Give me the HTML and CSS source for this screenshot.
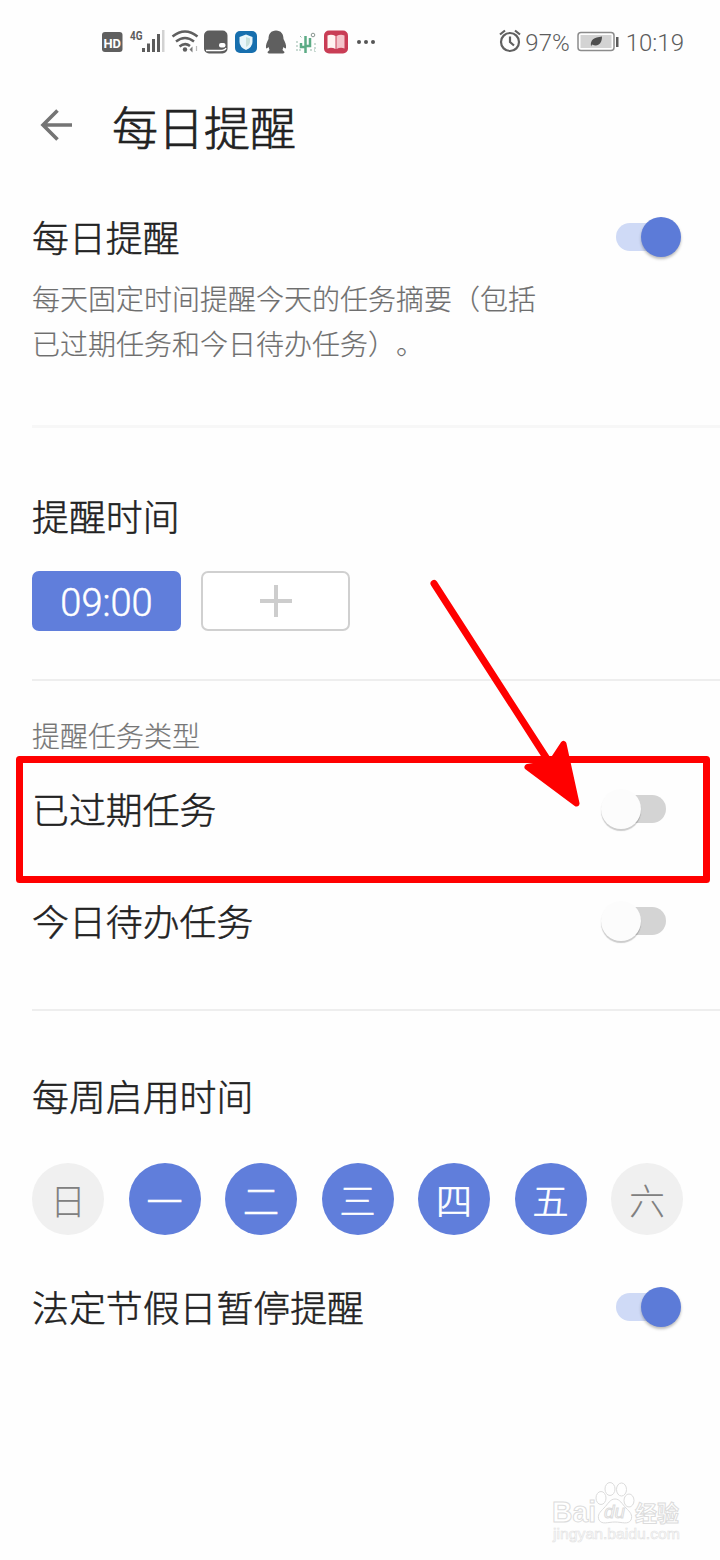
FILE: index.html
```html
<!DOCTYPE html>
<html lang="zh-CN">
<head>
<meta charset="utf-8">
<title>每日提醒</title>
<link rel="stylesheet" href="styles.css">
</head>
<body>
<div class="screen">
  <div class="status">
    <svg class="status-icons" width="280" height="30" viewBox="100 27 280 30">
      <rect x="102" y="32" width="20.500" height="20" rx="3" fill="#5f5f5f"/>
      <text class="hd" x="103.500" y="47.500" textLength="17.500" lengthAdjust="spacingAndGlyphs">HD</text>
      <text class="net" x="130" y="40" textLength="12.500" lengthAdjust="spacingAndGlyphs">4G</text>
      <g fill="#5c5c5c"><rect x="142" y="48" width="3" height="4"/><rect x="147" y="43.500" width="3" height="8.500"/><rect x="152" y="39" width="3" height="13"/><rect x="157" y="34" width="3" height="18"/></g>
      <rect x="162" y="30" width="2.500" height="22" fill="#d2d2d2"/>
      <g fill="none" stroke="#5f5f5f" stroke-width="2.500"><path d="M172.500 36.500Q185 26.500 197.500 36.500"/><path d="M176 41.500Q185 34.500 194 41.500"/><path d="M179.500 46.500Q185 42 190 46"/></g>
      <circle cx="185" cy="49.500" r="2.200" fill="#5f5f5f"/><path d="M192.500 46.500l-3 3 3 3z" fill="#777"/><path d="M196.500 46v5" fill="none" stroke="#bbb" stroke-width="1.200"/>
      <rect x="204" y="30.500" width="23.500" height="23" rx="5" fill="#5d5d5d"/>
      <path d="M206 50.500H220Q225 50.500 226 48" fill="none" stroke="#fff" stroke-width="1.500"/><rect x="219" y="43" width="6.500" height="4.500" rx="2" fill="#fff"/>
      <rect x="235" y="31" width="22" height="22" rx="5" fill="#176fae"/>
      <path d="M246 34.500l6.500 2.500v5q0 5-6.500 8-6.500-3-6.500-8v-5z" fill="#e8f6fb"/><path d="M246 37v10q4-2 4-6v-2.500z" fill="#c7e0dc"/>
      <path d="M276 30.500c-5 0-7.500 3.500-7.500 8.500-1.500 3-3 6-2.500 9 .5 1 1.500 0 2.500-1l1 3-2 2q0 1.500 3 1.500h11q3 0 3-1.500l-2-2 1-3c1 1 2 2 2.500 1 .5-3-1-6-2.500-9 0-5-2.500-8.500-7.500-8.500z" fill="#5f5f5f"/>
      <g fill="none" stroke="#5cab85" stroke-width="2.500"><path d="M305.500 36v17M301 43v4h4M310 38v8h-4"/></g>
      <path d="M297 41v11M315 43v9M300 36l2 2M310 50h5M299 50h4" fill="none" stroke="#95b7a8" stroke-dasharray="2 2"/><circle cx="313" cy="35" r="1.800" fill="none" stroke="#88958f"/>
      <rect x="324" y="30.500" width="24" height="23" rx="5" fill="#c93d55"/>
      <path d="M327.500 35.500q4-1.500 8 .5v13q-4-2-8-.5z" fill="#fff4f1"/><path d="M336.500 36q4-2 8-.5v13q-4-1.500-8 .5z" fill="#f4c4ca"/>
      <g fill="#555"><circle cx="359" cy="42" r="2"/><circle cx="366" cy="42" r="2"/><circle cx="373" cy="42" r="2"/></g>
    </svg>
    <div class="status-right">
      <svg width="24" height="26" viewBox="0 0 24 26" fill="none" stroke="#606060" stroke-width="2.200"><circle cx="12" cy="13" r="9"/><path d="M12 7.500V13l4 3.500M2 5.500l5-4M22 5.500l-5-4"/></svg>
      <span class="percent">97%</span>
      <svg class="battery" width="42" height="22" viewBox="0 0 42 22"><rect x="1" y="1.500" width="36" height="18" rx="3" fill="#fff" stroke="#8c8c8c" stroke-width="1.500"/><rect x="3.500" y="4" width="31" height="13" fill="#d3d3d3"/><path d="M14 15.500c-1-7 3-9 11-10 0 7-4 11-10 8zM13 17l5-5" fill="#4e4e4e"/><rect x="39" y="6" width="2.500" height="10" fill="#5c5c5c"/></svg>
      <span class="clock">10:19</span>
    </div>
  </div>

  <header class="header">
    <svg width="34" height="34" viewBox="0 0 34 34" fill="none" stroke="#747474" stroke-width="3.600"><path d="M33 17H4M18.500 2.500L4 17l14.500 14.500"/></svg>
    <h1 class="heading">每日提醒</h1>
  </header>

  <section class="daily">
    <div class="row"><span class="title">每日提醒</span><span class="switch on"></span></div>
    <p class="desc">每天固定时间提醒今天的任务摘要（包括<br>已过期任务和今日待办任务）。</p>
  </section>

  <section class="times">
    <div class="row"><span class="title">提醒时间</span></div>
    <div class="chips">
      <div class="chip filled">09:00</div>
      <div class="chip add"><svg width="32" height="34" viewBox="0 0 32 34" stroke="#cdcdcd" stroke-width="4"><path d="M0 17H32M16 1V33"/></svg></div>
    </div>
  </section>

  <section class="types">
    <div class="label">提醒任务类型</div>
    <div class="row overdue"><span class="title">已过期任务</span><span class="switch off"></span></div>
    <div class="row"><span class="title">今日待办任务</span><span class="switch off"></span></div>
  </section>

  <section class="weekly">
    <div class="row"><span class="title">每周启用时间</span></div>
    <div class="days">
      <span class="day">日</span><span class="day active">一</span><span class="day active">二</span><span class="day active">三</span><span class="day active">四</span><span class="day active">五</span><span class="day">六</span>
    </div>
    <div class="row"><span class="title">法定节假日暂停提醒</span><span class="switch on"></span></div>
  </section>

  <svg class="annotation" width="720" height="400" viewBox="0 560 720 400">
    <rect x="19.500" y="759.500" width="687" height="120" fill="none" stroke="#f00" stroke-width="7" stroke-linejoin="round"/>
    <path d="M434 583.500L549 762" stroke="#f00" stroke-width="7" stroke-linecap="round"/>
    <path d="M563.500 744L576.500 803.500L527.500 767L551 763Z" fill="#f00" stroke="#f00" stroke-width="6" stroke-linejoin="round"/>
  </svg>

  <svg class="watermark" width="140" height="70" viewBox="545 1478 140 70">
    <g fill="#fff" stroke="#dcdcdc" stroke-width="1">
      <ellipse cx="601" cy="1498" rx="5" ry="6.500"/><ellipse cx="610" cy="1489" rx="5" ry="6.500"/><ellipse cx="621.500" cy="1489.500" rx="5" ry="6.500"/><ellipse cx="629" cy="1500.500" rx="5" ry="6.500"/>
      <path d="M615 1499c-5 0-7 5-11 9-4 4-7 7-5 12 3 5 9 2 16 2s13 3 16-2c2-5-1-8-5-12-4-4-6-9-11-9z"/>
      <text class="wm-logo" x="552" y="1522" textLength="44" lengthAdjust="spacingAndGlyphs">Bai</text>
      <text class="wm-du" x="604" y="1518" textLength="21" lengthAdjust="spacingAndGlyphs">du</text>
      <text class="wm-cjk" x="635" y="1521" textLength="44">经验</text>
    </g>
    <text class="wm-url" x="553" y="1539" textLength="127" lengthAdjust="spacingAndGlyphs">jingyan.baidu.com</text>
  </svg>
</div>
</body>
</html>
```
FILE: styles.css
```css
* { box-sizing: border-box; }
body { margin: 0; background: #fefefe; }
.screen {
  position: relative;
  width: 720px;
  height: 1560px;
  overflow: hidden;
  background: #fefefe;
  color: #222;
  font-family: "Noto Sans CJK SC Light", "Noto Sans CJK SC", sans-serif;
  font-weight: 300;
}
.status {
  display: flex;
  justify-content: space-between;
  height: 84px;
  padding: 27px 36px 0 100px;
}
.status-right {
  display: flex;
  align-items: center;
  height: 30px;
  color: #5c5c5c;
  font: 300 24px/32px Roboto, sans-serif;
}
.percent { margin: 2px 0 0 3px; }
.battery { margin: 0 7px; }
.clock { margin-top: 2px; font-size: 24px; }
.hd { font: 700 13.500px Roboto, sans-serif; fill: #fff; }
.net { font: 700 12px Roboto, sans-serif; fill: #5c5c5c; }
.header {
  display: flex;
  align-items: center;
  gap: 39px;
  height: 82px;
  margin-bottom: 2px;
  padding-left: 39px;
}
.heading { margin: 0; font-size: 46px; font-weight: 300; line-height: 80px; -webkit-text-stroke: .7px; }
section { margin-left: 32px; border-bottom: 2px solid #eee; }
.row { display: flex; align-items: center; justify-content: space-between; height: 72px; }
.title { height: 74px; font-size: 36.900px; line-height: 72px; white-space: nowrap; -webkit-text-stroke: .5px; }
.daily { height: 260px; padding-top: 33px; border-bottom: 3px solid #f7f7f7; }
.desc {
  margin: 3px 0 0;
  color: #6e6e6e;
  font-size: 28px;
  line-height: 45px;
  white-space: nowrap;
  text-spacing-trim: space-all;
  -webkit-text-stroke: .2px;
}
.times { height: 253px; padding-top: 52px; }
.chips { display: flex; gap: 20px; margin-top: 19px; }
.chip {
  display: flex;
  align-items: center;
  justify-content: center;
  width: 149px;
  height: 60px;
  border-radius: 7px;
}
.filled {
  padding-top: 3px;
  background: #607edb;
  color: #fff;
  font: 300 38px Roboto, sans-serif;
  -webkit-text-stroke: .5px;
}
.add { border: 2px solid #d0d0d0; background: #fff; }
.types { height: 330px; padding-top: 29px; }
.label { color: #767676; font-size: 28px; line-height: 50px; -webkit-text-stroke: .2px; }
.overdue { margin: 13px 0 40px; }
.weekly { padding-top: 49px; border: 0; }
.days { display: flex; justify-content: space-between; width: 651px; margin: 31px 0 36px; }
.day {
  display: grid;
  place-items: center;
  width: 72px;
  height: 72px;
  border-radius: 50%;
  background: #f0f0f0;
  color: #808080;
  font-size: 36px;
  line-height: 70px;
}
.active { background: #607edb; color: #fff; -webkit-text-stroke: .7px; }
.switch { position: relative; width: 66px; height: 42px; }
.switch::before {
  content: "";
  position: absolute;
  top: 7px;
  left: 1px;
  width: 56px;
  height: 28px;
  border-radius: 14px;
}
.switch::after {
  content: "";
  position: absolute;
  top: 1px;
  width: 40px;
  height: 40px;
  border-radius: 50%;
}
.on { margin-right: 39px; }
.on::before { background: #cfdaf6; }
.on::after { right: 0; background: #5c7bd8; box-shadow: 0 2px 3px #0004; }
.off { margin-right: 54px; }
.off::before { left: 10px; background: #d4d4d4; }
.off::after { left: 1px; background: #fcfcfc; box-shadow: 0 2px 1px #0003; }
.annotation { position: absolute; left: 0; top: 560px; }
.watermark { position: absolute; left: 545px; top: 1478px; }
.wm-logo { font: 700 29px "Liberation Sans", sans-serif; }
.wm-du { font: italic 400 19px "Liberation Sans", sans-serif; }
.wm-cjk { font: 700 22px "Noto Sans CJK SC", sans-serif; }
.wm-url { font: 400 15px "Liberation Sans", sans-serif; fill: #fff; stroke: #e2e2e2; stroke-width: .6px; }
```
